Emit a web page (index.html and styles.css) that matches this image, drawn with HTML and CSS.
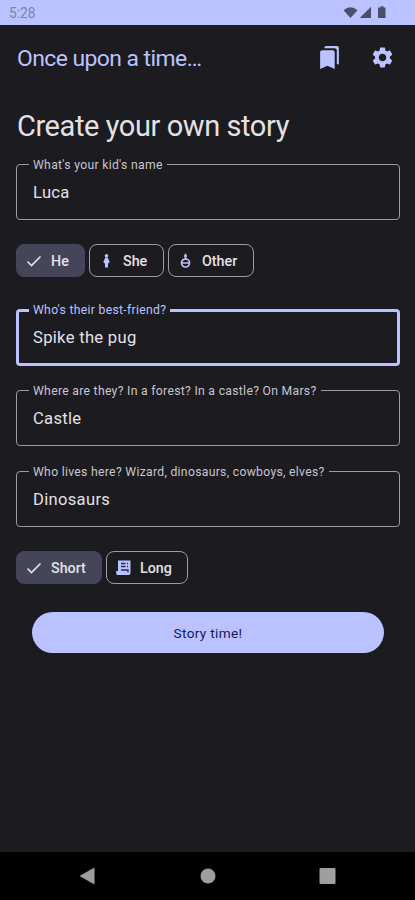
FILE: index.html
```html
<!DOCTYPE html>
<html lang="en">
<head>
<meta charset="utf-8">
<title>Once upon a time…</title>
<link rel="stylesheet" href="styles.css">
</head>
<body>
<div class="status">
  <span class="clock">5:28</span>
  <svg class="status-icons" width="48" height="16" viewBox="0 0 48 16">
    <path d="M.5 5.2Q7.500-.8 14.500 5.200L7.500 13z"/>
    <path d="M28 1.700V13H16.700z"/>
    <path d="M37.500 1.200h3v1.400h2V13h-7.500V2.600h2.500z"/>
  </svg>
</div>
<header class="topbar">
  <h1 class="app-title">Once upon a time…</h1>
  <svg class="action" width="25" height="25" viewBox="0 0 24 24"><path d="M19 18l2 1V3c0-1.100-.9-2-2-2H8.990C7.890 1 7 1.900 7 3h10c1.100 0 2 .9 2 2v13zM15 5H5c-1.100 0-2 .9-2 2v16l7-3 7 3V7c0-1.100-.9-2-2-2z"/></svg>
  <svg class="action" width="25" height="25" viewBox="0 0 24 24"><path d="M19.140 12.940c.04-.3.060-.61.060-.94 0-.32-.02-.64-.07-.94l2.030-1.580c.18-.14.230-.41.120-.61l-1.920-3.320c-.12-.22-.37-.29-.59-.22l-2.390.96c-.5-.38-1.030-.7-1.620-.94l-.36-2.540c-.04-.24-.24-.41-.48-.41h-3.840c-.24 0-.43.170-.47.410l-.36 2.540c-.59.240-1.130.57-1.620.94l-2.390-.96c-.22-.08-.47 0-.59.220L2.740 8.870c-.12.210-.08.470.12.610l2.030 1.580c-.05.3-.09.630-.09.940s.02.640.07.940l-2.030 1.580c-.18.140-.23.410-.12.610l1.920 3.320c.12.220.37.290.59.220l2.390-.96c.5.380 1.030.7 1.620.94l.36 2.540c.05.240.24.410.48.410h3.840c.24 0 .44-.17.470-.41l.36-2.540c.59-.24 1.130-.56 1.620-.94l2.390.96c.22.080.47 0 .59-.22l1.920-3.320c.12-.22.070-.47-.12-.61l-2.010-1.580zM12 15.600c-1.980 0-3.600-1.620-3.600-3.600s1.620-3.600 3.600-3.600 3.600 1.620 3.600 3.600-1.620 3.600-3.600 3.600z"/></svg>
</header>
<main class="form">
  <h2 class="heading">Create your own story</h2>
  <fieldset class="field"><legend>What's your kid's name</legend><div class="value">Luca</div></fieldset>
  <div class="chips">
    <div class="chip selected he"><svg width="18" height="18" viewBox="0 0 18 18"><path class="tick" d="M2.500 9.500l4 4 9-9"/></svg><span>He</span></div>
    <div class="chip she"><svg width="18" height="18" viewBox="0 0 18 18"><circle cx="8.500" cy="3.700" r="1.800"/><path d="M7.300 5.500h2.400l2 4.500-1.700 1.800v3.700H7v-3.700L5.300 10z"/></svg><span>She</span></div>
    <div class="chip other"><svg width="18" height="18" viewBox="0 0 18 18"><path class="ring" d="M8.500 1.800v6M7 4h3M4.500 11h8"/><circle class="ring" cx="8.500" cy="11" r="4"/></svg><span>Other</span></div>
  </div>
  <fieldset class="field focused"><legend>Who's their best-friend?</legend><div class="value">Spike the pug</div></fieldset>
  <fieldset class="field"><legend>Where are they? In a forest? In a castle? On Mars?</legend><div class="value">Castle</div></fieldset>
  <fieldset class="field"><legend>Who lives here? Wizard, dinosaurs, cowboys, elves?</legend><div class="value">Dinosaurs</div></fieldset>
  <div class="chips">
    <div class="chip selected short"><svg width="18" height="18" viewBox="0 0 18 18"><path class="tick" d="M2.500 9.500l4 4 9-9"/></svg><span>Short</span></div>
    <div class="chip long"><svg width="18" height="18" viewBox="0 0 18 18"><path d="M3 1.500h12.500V14q0 2-2 2H3Q1.200 16 1.200 14.500V12H3z"/><path class="cut" d="M6 4.500h4.500M12 4.500h1M6 7.500h4.500M12 7.500h1M6 11h7v2.500"/></svg><span>Long</span></div>
  </div>
  <button class="submit" type="button">Story time!</button>
</main>
<nav class="navbar">
  <svg width="20" height="20" viewBox="0 0 20 20"><path d="M1.500 10L16.500 1.500v17z"/></svg>
  <svg width="20" height="20" viewBox="0 0 20 20"><circle cx="10" cy="10" r="7.500"/></svg>
  <svg width="20" height="20" viewBox="0 0 20 20"><rect x="1.500" y="2" width="16" height="16" rx="1"/></svg>
</nav>
</body>
</html>
```
FILE: styles.css
```css
* { box-sizing: border-box; }
body {
  margin: 0;
  height: 900px;
  display: flex;
  flex-direction: column;
  background: #1c1b1f;
  color: #e3e1e6;
  font-family: Roboto, sans-serif;
  overflow: hidden;
}
svg { display: block; flex: none; }
.status {
  height: 25px;
  background: #bac3ff;
  display: flex;
  align-items: center;
  justify-content: space-between;
  padding: 0 24px 0 9px;
}
.clock { font-size: 13.800px; color: #7c82ae; }
.status-icons { fill: #4a4e68; margin-top: 1px; }
.topbar {
  height: 65px;
  display: flex;
  align-items: center;
  padding: 0 20px 0 17px;
}
.app-title {
  flex: 1;
  margin: 0;
  padding-top: 2px;
  font-size: 22.900px;
  font-weight: 400;
  letter-spacing: -.55px;
  color: #bac3ff;
}
.action { fill: #bac3ff; }
.action + .action { margin-left: 28px; }
.form {
  flex: 1;
  display: flex;
  flex-direction: column;
  padding: 0 15px 0 16px;
}
.heading {
  margin: 17px 0 11px 1px;
  height: 39px;
  line-height: 39px;
  font-size: 29px;
  font-weight: 400;
  letter-spacing: -.42px;
}
.field {
  height: 63px;
  flex: none;
  margin: 0 0 18px;
  padding: 0 12px;
  border: 1px solid #9c9ba1;
  border-radius: 4px;
  min-width: 0;
}
.field legend {
  height: 14px;
  line-height: 16px;
  padding: 0 4px;
  font-size: 12.200px;
  letter-spacing: .3px;
  color: #c7c5d0;
  white-space: nowrap;
}
.value {
  padding-left: 4px;
  height: 44px;
  line-height: 44.500px;
  font-size: 16.600px;
  letter-spacing: .3px;
}
.focused {
  border: 3px solid #bac3ff;
  padding: 0 10px;
  margin-bottom: 17px;
}
.focused .value { margin-top: -1px; }
.field.focused legend { color: #bac3ff; line-height: 15px; }
.chips {
  display: flex;
  gap: 4px;
  margin: 6px 0 26px;
}
.chip {
  height: 33px;
  display: flex;
  align-items: center;
  gap: 8px;
  padding-left: 8px;
  border: 1px solid #9c9ba1;
  border-radius: 8px;
  font-size: 14.300px;
  font-weight: 500;
}
.chip span { padding-top: 1px; }
.chip svg { fill: #bac3ff; }
.selected { background: #444559; border-color: #444559; }
.he { width: 69px; }
.she { width: 75px; }
.she span, .other span, .long span { margin-left: -1px; }
.other { width: 86px; }
.short { width: 86px; }
.long { width: 82px; }
.chip .tick { fill: none; stroke: #e3e1f9; stroke-width: 1.600; }
.chip .ring { fill: none; stroke: #bac3ff; stroke-width: 1.700; }
.chip .cut { fill: none; stroke: #2b2b42; stroke-width: 1.300; }
.submit {
  height: 41px;
  margin: 2px 16px 0;
  border: 0;
  border-radius: 21px;
  background: #bac3ff;
  color: #15195a;
  font: 400 13.600px Roboto, sans-serif;
  letter-spacing: .35px;
}
.navbar {
  height: 48px;
  background: #000;
  display: flex;
  justify-content: center;
  gap: 100px;
  align-items: center;
}
.navbar svg { fill: #9e9e9e; }
```
